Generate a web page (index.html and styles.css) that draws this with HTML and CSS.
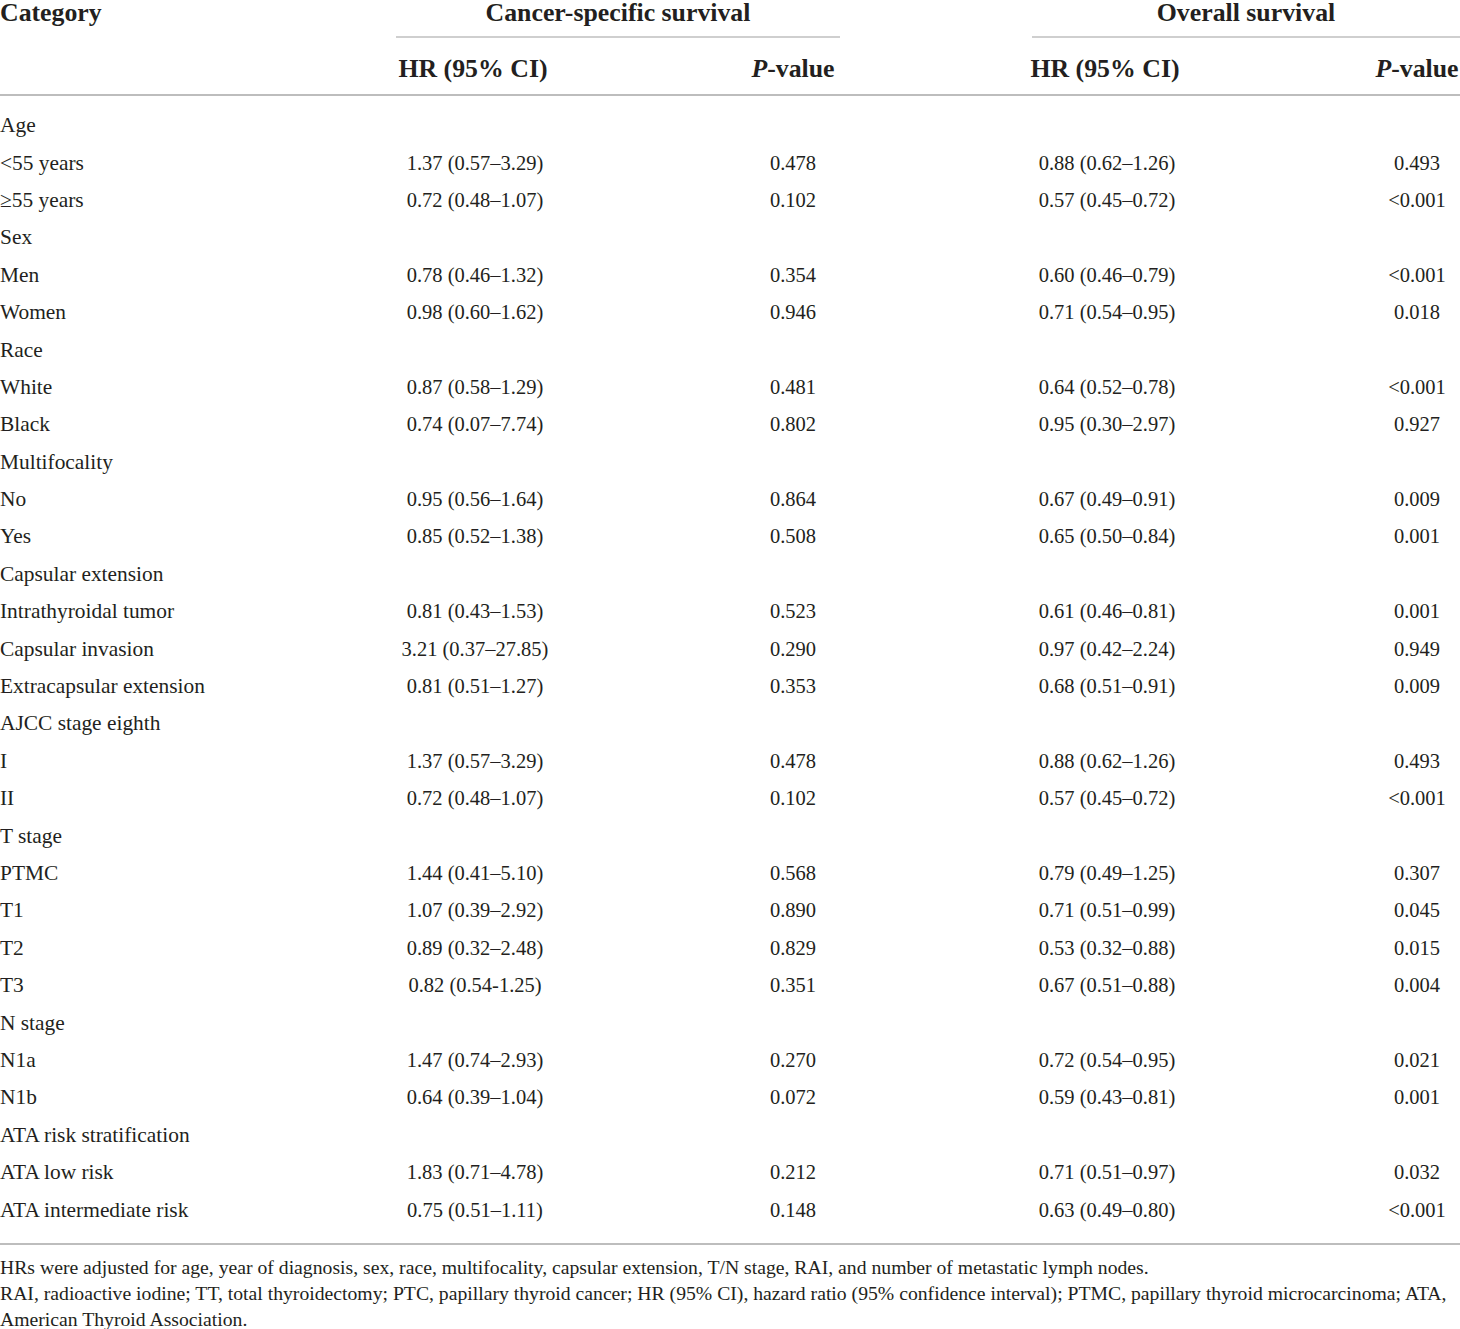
FILE: index.html
```html
<!DOCTYPE html>
<html lang="en">
<head>
    <link rel="stylesheet" href="styles.css">
    <title>Subgroup hazard ratios</title>
</head>
<body>
<div class="table">
    <div class="head">
        <div class="cell cat th">Category</div>
        <div class="group"><span class="group-title">Cancer-specific survival</span></div>
        <div class="group"><span class="group-title">Overall survival</span></div>
    </div>
    <div class="subhead">
        <div class="cell cat"></div>
        <div class="cell th">HR (95% CI)</div>
        <div class="cell th"><i>P</i>-value</div>
        <div class="cell th">HR (95% CI)</div>
        <div class="cell th"><i>P</i>-value</div>
    </div>
    <div id="rows" class="rows"></div>
</div>

<div class="notes">
    <p>HRs were adjusted for age, year of diagnosis, sex, race, multifocality, capsular extension, T/N stage, RAI, and number of metastatic lymph nodes.</p>
    <p>RAI, radioactive iodine; TT, total thyroidectomy; PTC, papillary thyroid cancer; HR (95% CI), hazard ratio (95% confidence interval); PTMC, papillary thyroid microcarcinoma; ATA, American Thyroid Association.</p>
</div>

<script>
    const data = [
        ["Age"],
        ["<55 years", "1.37 (0.57–3.29)", "0.478", "0.88 (0.62–1.26)", "0.493"],
        ["≥55 years", "0.72 (0.48–1.07)", "0.102", "0.57 (0.45–0.72)", "<0.001"],
        ["Sex"],
        ["Men", "0.78 (0.46–1.32)", "0.354", "0.60 (0.46–0.79)", "<0.001"],
        ["Women", "0.98 (0.60–1.62)", "0.946", "0.71 (0.54–0.95)", "0.018"],
        ["Race"],
        ["White", "0.87 (0.58–1.29)", "0.481", "0.64 (0.52–0.78)", "<0.001"],
        ["Black", "0.74 (0.07–7.74)", "0.802", "0.95 (0.30–2.97)", "0.927"],
        ["Multifocality"],
        ["No", "0.95 (0.56–1.64)", "0.864", "0.67 (0.49–0.91)", "0.009"],
        ["Yes", "0.85 (0.52–1.38)", "0.508", "0.65 (0.50–0.84)", "0.001"],
        ["Capsular extension"],
        ["Intrathyroidal tumor", "0.81 (0.43–1.53)", "0.523", "0.61 (0.46–0.81)", "0.001"],
        ["Capsular invasion", "3.21 (0.37–27.85)", "0.290", "0.97 (0.42–2.24)", "0.949"],
        ["Extracapsular extension", "0.81 (0.51–1.27)", "0.353", "0.68 (0.51–0.91)", "0.009"],
        ["AJCC stage eighth"],
        ["I", "1.37 (0.57–3.29)", "0.478", "0.88 (0.62–1.26)", "0.493"],
        ["II", "0.72 (0.48–1.07)", "0.102", "0.57 (0.45–0.72)", "<0.001"],
        ["T stage"],
        ["PTMC", "1.44 (0.41–5.10)", "0.568", "0.79 (0.49–1.25)", "0.307"],
        ["T1", "1.07 (0.39–2.92)", "0.890", "0.71 (0.51–0.99)", "0.045"],
        ["T2", "0.89 (0.32–2.48)", "0.829", "0.53 (0.32–0.88)", "0.015"],
        ["T3", "0.82 (0.54-1.25)", "0.351", "0.67 (0.51–0.88)", "0.004"],
        ["N stage"],
        ["N1a", "1.47 (0.74–2.93)", "0.270", "0.72 (0.54–0.95)", "0.021"],
        ["N1b", "0.64 (0.39–1.04)", "0.072", "0.59 (0.43–0.81)", "0.001"],
        ["ATA risk stratification"],
        ["ATA low risk", "1.83 (0.71–4.78)", "0.212", "0.71 (0.51–0.97)", "0.032"],
        ["ATA intermediate risk", "0.75 (0.51–1.11)", "0.148", "0.63 (0.49–0.80)", "<0.001"]
    ];

    const rows = document.querySelector("#rows");
    data.forEach(row => {
        const line = document.createElement("div");
        line.className = "row";
        for (let i = 0; i < 5; i++) {
            const cell = document.createElement("div");
            cell.className = i === 0 ? "cell cat" : "cell num";
            cell.textContent = row[i] || "";
            line.appendChild(cell);
        }
        rows.appendChild(line);
    });
</script>
</body>
</html>
```

FILE: styles.css
```css
body {
    margin: 0;
    font-family: "Liberation Serif", "Times New Roman", serif;
    color: #231f20;
    background-color: white;
    width: 1460px;
}

.head,
.subhead,
.row {
    display: grid;
    grid-template-columns: 204px 542px 94px 534px 86px;
}

.head {
    grid-template-columns: 204px 636px 620px;
    height: 38px;
}

.cell {
    white-space: nowrap;
    text-align: center;
}

.cell.cat {
    text-align: left;
}

.th {
    font-weight: bold;
    font-size: 25.8px;
}

.head .th {
    line-height: 25px;
}

.group {
    padding-left: 192px;
    display: flex;
}

.group-title {
    flex: 1;
    text-align: center;
    font-weight: bold;
    font-size: 25.8px;
    line-height: 25px;
    border-bottom: 2px solid #cfcfcf;
}

.subhead {
    height: 50px;
    padding-top: 6px;
    align-items: center;
    border-bottom: 2px solid #bdbdbd;
}

.subhead .cell:nth-child(2),
.subhead .cell:nth-child(4) {
    padding-right: 4px;
}

.rows {
    padding-top: 11px;
    padding-bottom: 14px;
    border-bottom: 2px solid #bdbdbd;
}

.row {
    height: 37.4px;
    align-items: center;
    font-size: 20.5px;
}

.row .cat {
    font-size: 21.4px;
}

.notes {
    padding-top: 9px;
    font-size: 19.7px;
    line-height: 26px;
}

.notes p {
    margin: 0;
}
```
